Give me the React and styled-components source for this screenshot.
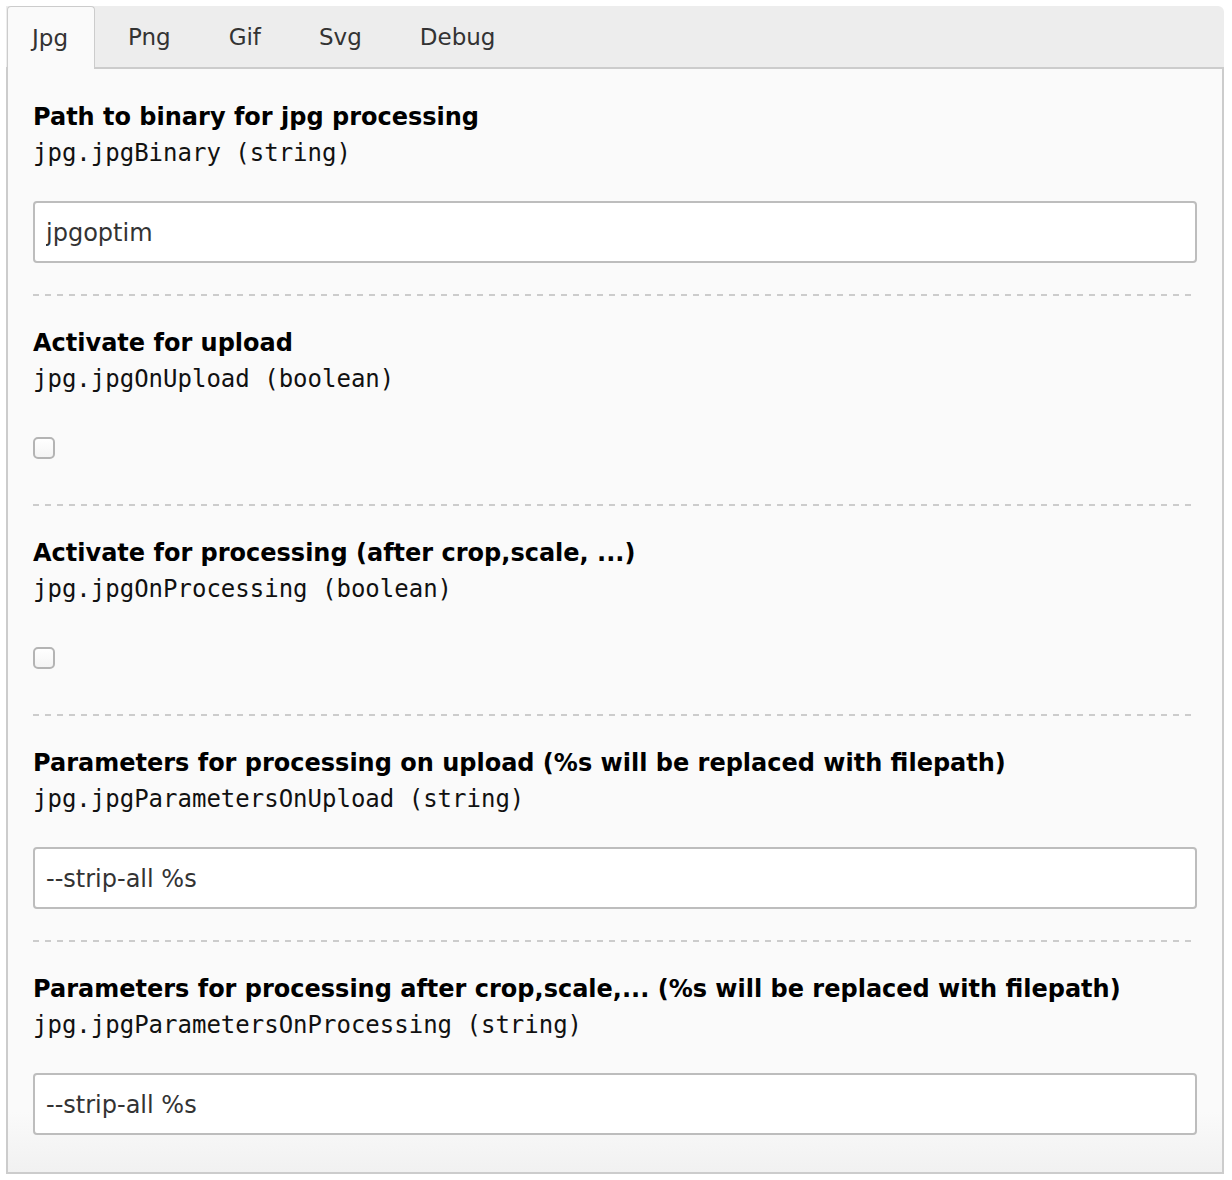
import React, { useState } from "react";
import styled, { createGlobalStyle } from "styled-components";

const GlobalStyle = createGlobalStyle`
  html, body {
    margin: 0;
    padding: 0;
    background: #fff;
  }
  body {
    font-family: "DejaVu Sans", Verdana, sans-serif;
    color: #000;
  }
`;

const tabs = ["Jpg", "Png", "Gif", "Svg", "Debug"];

const fields = [
  {
    id: "jpgBinary",
    title: "Path to binary for jpg processing",
    key: "jpg.jpgBinary (string)",
    type: "text",
    value: "jpgoptim",
  },
  {
    id: "jpgOnUpload",
    title: "Activate for upload",
    key: "jpg.jpgOnUpload (boolean)",
    type: "checkbox",
  },
  {
    id: "jpgOnProcessing",
    title: "Activate for processing (after crop,scale, ...)",
    key: "jpg.jpgOnProcessing (boolean)",
    type: "checkbox",
  },
  {
    id: "jpgParametersOnUpload",
    title: "Parameters for processing on upload (%s will be replaced with filepath)",
    key: "jpg.jpgParametersOnUpload (string)",
    type: "text",
    value: "--strip-all %s",
  },
  {
    id: "jpgParametersOnProcessing",
    title: "Parameters for processing after crop,scale,... (%s will be replaced with filepath)",
    key: "jpg.jpgParametersOnProcessing (string)",
    type: "text",
    value: "--strip-all %s",
  },
];

const App = () => {
  const [active, setActive] = useState("Jpg");

  return (
    <>
      <GlobalStyle />
      <Wrapper>
        <TabBar>
          {tabs.map((t) => (
            <Tab key={t} active={t === active} onClick={() => setActive(t)}>
              {t}
            </Tab>
          ))}
        </TabBar>
        <Panel>
          {fields.map((f, i) => (
            <Section key={f.id}>
              <Title>{f.title}</Title>
              <Key>{f.key}</Key>
              {f.type === "text" ? (
                <TextInput type="text" defaultValue={f.value} />
              ) : (
                <CheckRow>
                  <Check type="checkbox" />
                </CheckRow>
              )}
              {i < fields.length - 1 && <Separator />}
            </Section>
          ))}
        </Panel>
      </Wrapper>
    </>
  );
};

const Wrapper = styled.div`
  width: 1218px;
  margin: 6px 0 0 6px;
`;

const TabBar = styled.div`
  display: flex;
  align-items: flex-end;
  gap: 8px;
  height: 61px;
  padding-left: 1px;
  background-color: #ededed;
  border-bottom: 2px solid #cccccc;
  border-radius: 0 6px 0 0;
`;

const Tab = styled.button`
  height: ${(p) => (p.active ? "63px" : "61px")};
  margin-bottom: ${(p) => (p.active ? "-2px" : "0")};
  padding: ${(p) => (p.active ? "0 26px 0 24px" : "0 24px")};
  border: 1px solid ${(p) => (p.active ? "#cccccc" : "transparent")};
  border-bottom: none;
  border-radius: 4px 4px 0 0;
  background-color: ${(p) => (p.active ? "#fafafa" : "transparent")};
  font-family: "DejaVu Sans", Verdana, sans-serif;
  font-size: 23px;
  color: #333;
  cursor: pointer;
  outline: none;
`;

const Panel = styled.div`
  padding: 1px 25px 37px;
  border: 2px solid #cccccc;
  border-top: none;
  background: linear-gradient(to bottom, #fafafa calc(100% - 60px), #f1f1f1 100%);
`;

const Section = styled.div`
  padding-top: 29px;
`;

const Title = styled.div`
  font-family: "DejaVu Sans", Verdana, sans-serif;
  font-weight: bold;
  font-size: 24px;
  line-height: 36px;
  color: #000;
`;

const Key = styled.div`
  font-family: "DejaVu Sans Mono", Menlo, monospace;
  font-size: 24px;
  line-height: 36px;
  color: #111;
`;

const TextInput = styled.input`
  display: block;
  box-sizing: border-box;
  width: 100%;
  height: 62px;
  margin-top: 30px;
  padding: 2px 11px 0;
  border: 2px solid #bdbdbd;
  border-radius: 4px;
  background-color: #fff;
  font-family: "DejaVu Sans", Verdana, sans-serif;
  font-size: 24px;
  color: #333;
  outline: none;
`;

const CheckRow = styled.div`
  padding: 40px 0 14px;
`;

const Check = styled.input`
  appearance: none;
  display: block;
  box-sizing: border-box;
  width: 22px;
  height: 22px;
  margin: 0;
  border: 2px solid #b4b4b4;
  border-radius: 5px;
  background: linear-gradient(#ffffff, #f4f4f4);
  cursor: pointer;
`;

const Separator = styled.div`
  height: 2px;
  margin-top: 31px;
  background-image: repeating-linear-gradient(
    to right,
    #cccccc 0 6px,
    transparent 6px 12px
  );
`;

export default App;
